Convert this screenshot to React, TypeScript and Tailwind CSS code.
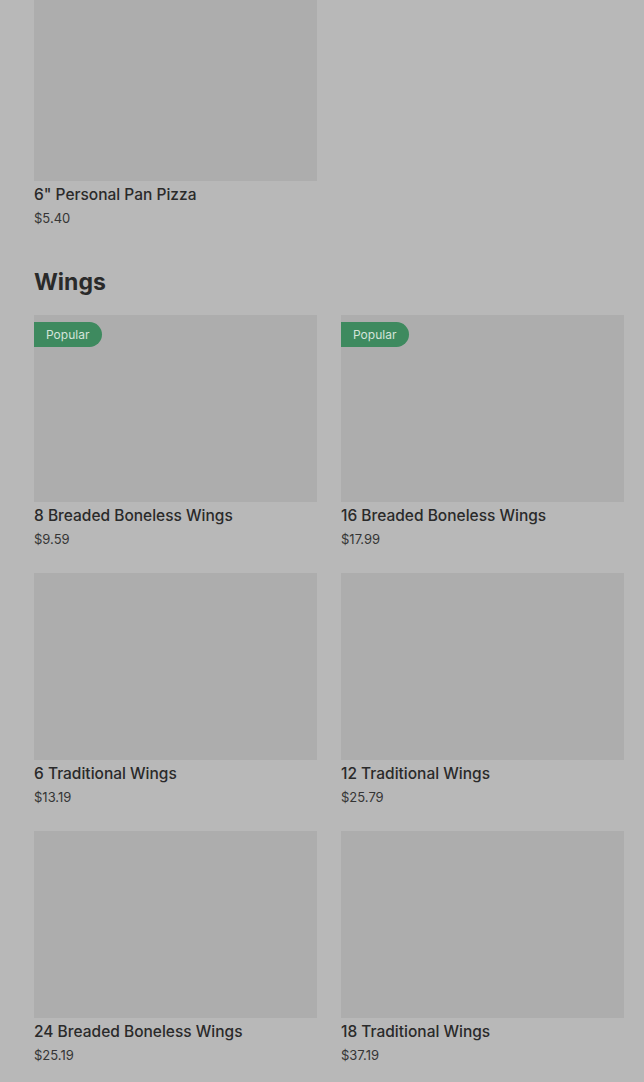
import React from "react";

type Item = { name: string; price: string; popular?: boolean };

const wings: Item[] = [
  { name: "8 Breaded Boneless Wings", price: "$9.59", popular: true },
  { name: "16 Breaded Boneless Wings", price: "$17.99", popular: true },
  { name: "6 Traditional Wings", price: "$13.19" },
  { name: "12 Traditional Wings", price: "$25.79" },
  { name: "24 Breaded Boneless Wings", price: "$25.19" },
  { name: "18 Traditional Wings", price: "$37.19" },
];

function Card({ item }: { item: Item }) {
  return (
    <div className="flex flex-col">
      <div className="relative h-[187px] bg-[#adadad]">
        {item.popular && (
          <div className="absolute left-0 top-[7px] flex h-[25px] w-[68px] items-center rounded-r-full bg-[#3e8a5f] pl-[12px] text-[12px] text-[#d4e4da]">
            Popular
          </div>
        )}
      </div>
      <div className="mt-[2px] text-[15.5px] font-medium leading-[24px] text-[#2a2a2a]">{item.name}</div>
      <div className="mt-[1px] text-[13px] leading-[20px] text-[#353535]">{item.price}</div>
    </div>
  );
}

export default function App() {
  return (
    <div
      className="min-h-screen overflow-hidden bg-[#b8b8b8] pl-[34px] pr-[20px]"
      style={{ fontFamily: "Inter, 'Noto Sans', sans-serif" }}
    >
      <div className="-mt-[6px] grid grid-cols-2 gap-x-6">
        <Card item={{ name: '6" Personal Pan Pizza', price: "$5.40" }} />
      </div>
      <h2 className="mt-[38px] mb-[17px] text-[23px] font-bold leading-[32px] text-[#2a2a2a]">Wings</h2>
      <div className="grid grid-cols-2 gap-x-6 gap-y-6 pb-10">
        {wings.map((w) => (
          <Card key={w.name} item={w} />
        ))}
      </div>
    </div>
  );
}
